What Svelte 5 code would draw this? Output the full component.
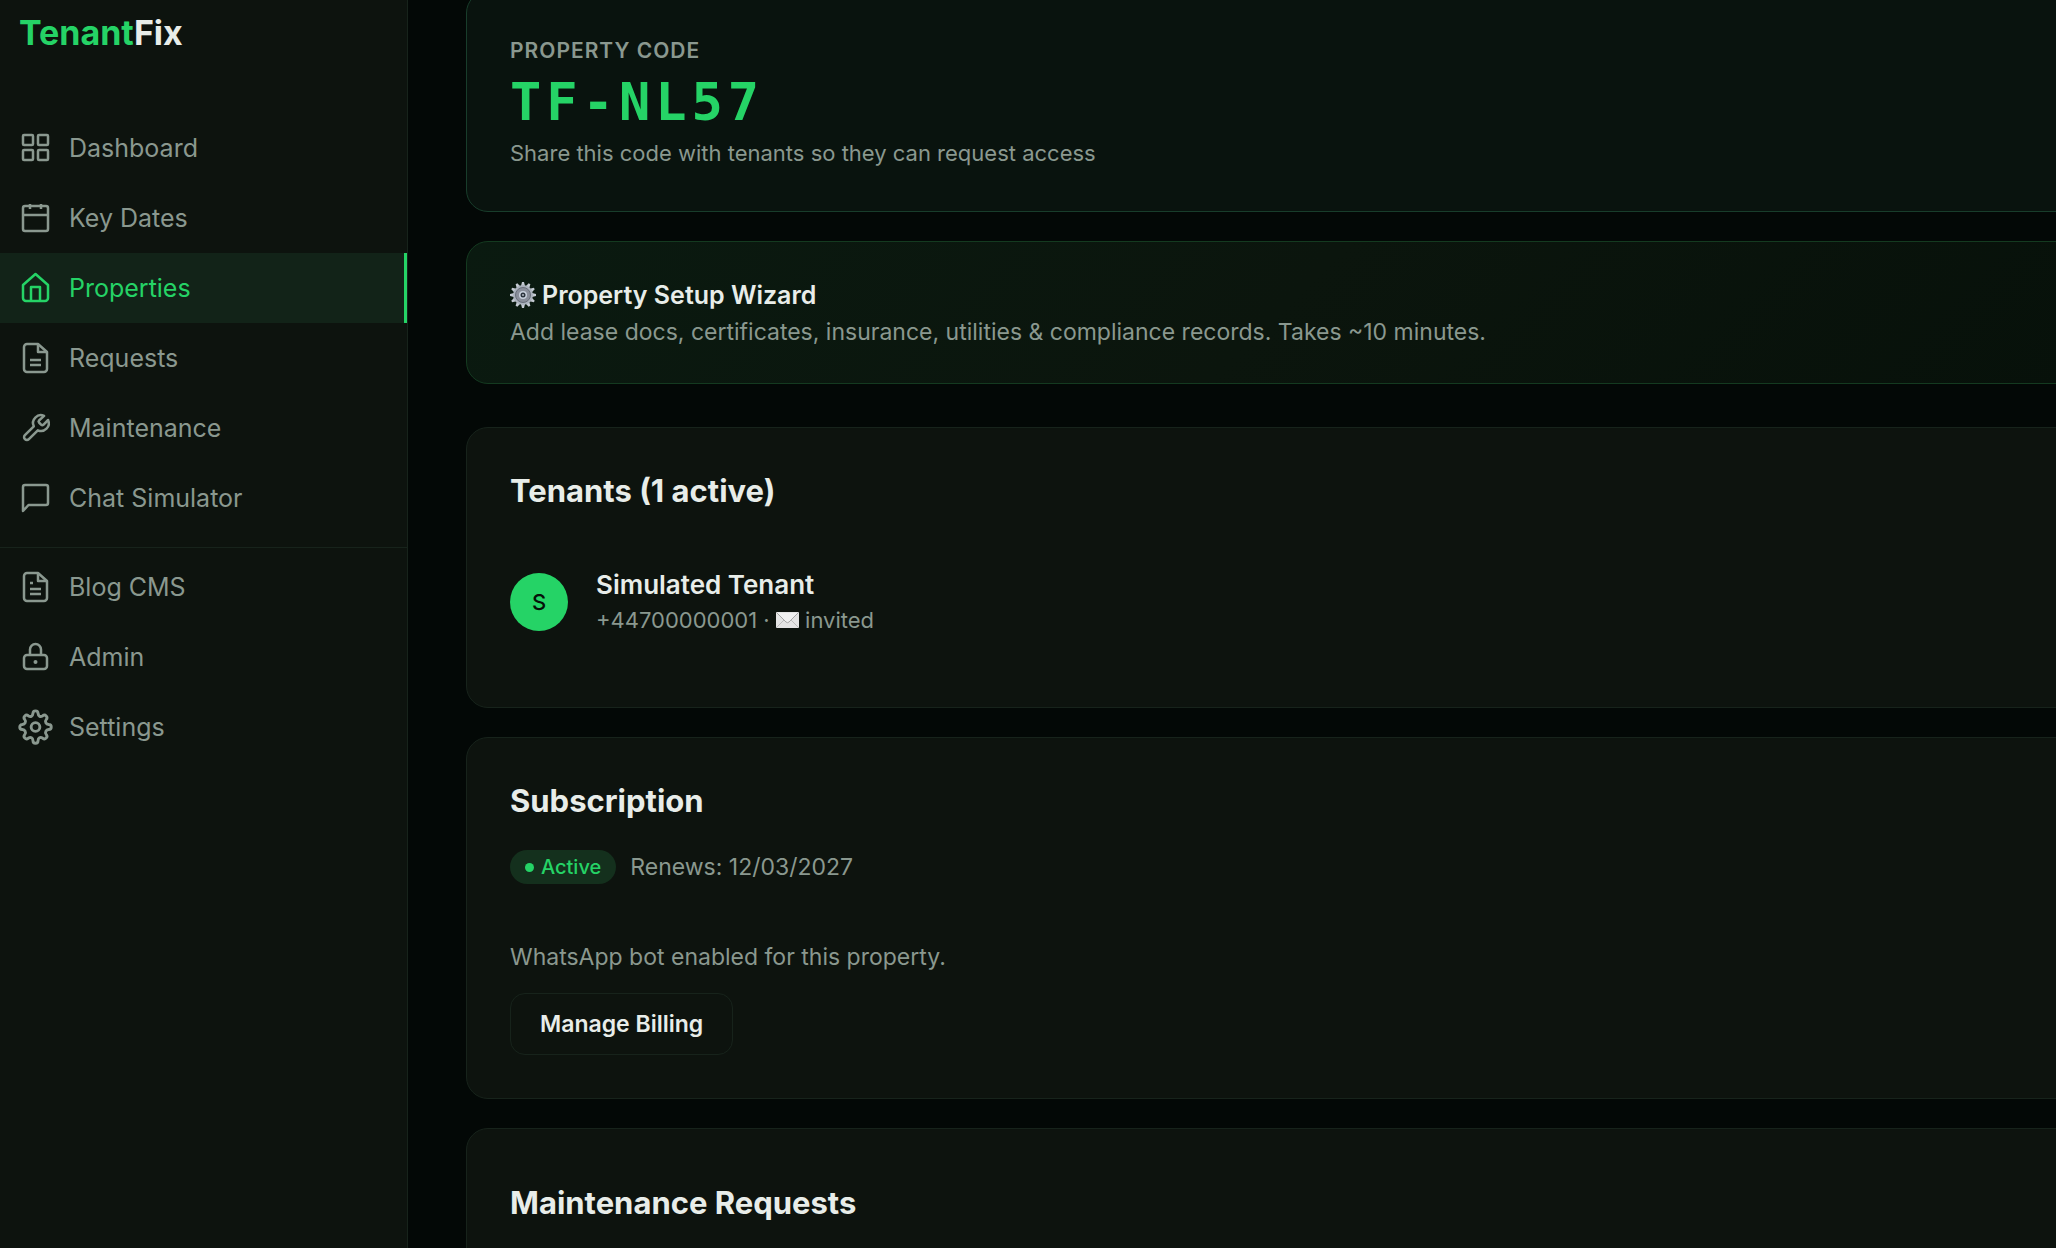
<script lang="ts">
    const mainNav = [
        { label: 'Dashboard', icon: 'grid' },
        { label: 'Key Dates', icon: 'calendar' },
        { label: 'Properties', icon: 'home' },
        { label: 'Requests', icon: 'file' },
        { label: 'Maintenance', icon: 'wrench' },
        { label: 'Chat Simulator', icon: 'chat' },
    ];

    const adminNav = [
        { label: 'Blog CMS', icon: 'article' },
        { label: 'Admin', icon: 'lock' },
        { label: 'Settings', icon: 'gear' },
    ];

    let current = $state('Properties');

    // one tooth of the wizard cog every 30 degrees
    const teeth = Array.from({ length: 12 }, (_, i) => i * 30);
</script>

{#snippet icon(name: string)}
    <svg class="icon" viewBox="0 0 32 32" aria-hidden="true">
        {#if name === 'grid'}
            <rect x="3" y="3" width="10" height="10" rx="1" />
            <rect x="18" y="3" width="10" height="10" rx="1" />
            <rect x="3" y="18" width="10" height="10" rx="1" />
            <rect x="18" y="18" width="10" height="10" rx="1" />
        {:else if name === 'calendar'}
            <rect x="3" y="4" width="25" height="25" rx="2" />
            <path d="M10 2v5M21 2v5M3 13h25" />
        {:else if name === 'home'}
            <path d="M3 13 15.5 2 28 13v13a3 3 0 0 1-3 3H6a3 3 0 0 1-3-3z" />
            <path d="M11 29V15h9v14" />
        {:else if name === 'file'}
            <path d="M18 2H7a3 3 0 0 0-3 3v22a3 3 0 0 0 3 3h17a3 3 0 0 0 3-3V10z" />
            <path d="M18 2v8h9M10 18h11M10 23h11" />
        {:else if name === 'wrench'}
            <path d="m19 8.500a1.5 1.5 0 0 0 0 2l2.300 2.300a1.5 1.5 0 0 0 2 0l4.800-4.800a7.800 7.800 0 0 1-10.300 10.300L8.900 27.200a2.800 2.800 0 0 1-4-4l8.900-8.900A7.800 7.800 0 0 1 24.100 3.900z" />
        {:else if name === 'chat'}
            <path d="M28 21a2 2 0 0 1-2 2H8.500L3 29V5a2 2 0 0 1 2-2h21a2 2 0 0 1 2 2z" />
        {:else if name === 'article'}
            <path d="M18 2H7a3 3 0 0 0-3 3v22a3 3 0 0 0 3 3h17a3 3 0 0 0 3-3V10z" />
            <path d="M18 2v8h9M10 18h11M10 23h11M10 12h3" />
        {:else if name === 'lock'}
            <rect x="4" y="14" width="23" height="14" rx="3" />
            <path d="M10 14V8.500a5.500 5.500 0 0 1 11 0V14" />
            <circle class="fill" cx="15.5" cy="21" r="2" />
        {:else if name === 'gear'}
            <g transform="translate(15.5 16) scale(1.15) translate(-15.6 -15)">
                <path d="M13.400 3.200a2.200 2.200 0 0 1 4.400 0c.2 2.300 1.900 3.300 3.900 2.200 1.200-1 2.400-.8 3.200 0s1 2 0 3.200c-1.500 1.800-.1 3.900 2.200 4.200a2.200 2.200 0 0 1 0 4.400c-2.300.3-3.600 2.300-2.200 4.200 1 1.200.8 2.400 0 3.200s-2 1-3.200 0c-2-1.100-3.700-.1-3.900 2.300a2.200 2.200 0 0 1-4.400 0c-.2-2.400-1.900-3.400-3.900-2.300-1.200 1-2.400.8-3.200 0s-1-2 0-3.200c1.400-1.900.1-3.900-2.200-4.200a2.200 2.200 0 0 1 0-4.400c2.300-.3 3.700-2.400 2.200-4.200-1-1.200-.8-2.400 0-3.200s2-1 3.200 0c2 1.100 3.700.1 3.900-2.200z" />
                <circle cx="15.600" cy="15" r="3.800" />
            </g>
        {/if}
    </svg>
{/snippet}

{#snippet navLink(item: { label: string; icon: string })}
    <a
        href="#{item.icon}"
        class:active={current === item.label}
        aria-current={current === item.label ? 'page' : undefined}
        onclick={() => (current = item.label)}
    >
        {@render icon(item.icon)}
        {item.label}
    </a>
{/snippet}

<div class="app">
    <aside class="sidebar">
        <div class="logo">Tenant<span>Fix</span></div>
        <nav>
            {#each mainNav as item}
                {@render navLink(item)}
            {/each}
            <hr />
            {#each adminNav as item}
                {@render navLink(item)}
            {/each}
        </nav>
    </aside>

    <main>
        <section class="card code-card">
            <div class="eyebrow">Property Code</div>
            <div class="code">TF-NL57</div>
            <p>Share this code with tenants so they can request access</p>
        </section>

        <section class="card wizard">
            <div class="wizard-title">
                <svg class="cog" viewBox="0 0 26 26" aria-hidden="true">
                    {#each teeth as angle}
                        <path d="M11 4 12 0h2l1 4z" fill="#c3c9d1" transform="rotate({angle} 13 13)" />
                    {/each}
                    <circle cx="13" cy="13" r="10" fill="#aab1bc" />
                    <circle cx="13" cy="13" r="7.5" fill="#8a8f9b" stroke="#686e79" />
                    <circle cx="13" cy="13" r="4" fill="#c8d0dc" />
                    <circle cx="13" cy="13" r="2.5" fill="#2b333d" />
                    <circle cx="13" cy="13" r="1" fill="#b4bbc4" />
                </svg>
                Property Setup Wizard
            </div>
            <p>Add lease docs, certificates, insurance, utilities &amp; compliance records. Takes ~10 minutes.</p>
        </section>

        <section class="card tenants">
            <h2>Tenants (1 active)</h2>
            <div class="tenant">
                <div class="avatar">S</div>
                <div>
                    <div class="name">Simulated Tenant</div>
                    <div class="contact">
                        +44700000001 ·
                        <svg class="mail" viewBox="0 0 23 16" aria-hidden="true">
                            <rect width="23" height="16" rx="1" fill="#e4e4e4" />
                            <path d="m1 15 7-7M22 15l-7-7" stroke="#bcbcbc" fill="none" />
                            <path d="m1 1 9 9q1.500 1.400 3 0l9-9" stroke="#a5a5a5" fill="#f1f1f1" />
                        </svg>
                        invited
                    </div>
                </div>
            </div>
        </section>

        <section class="card subscription">
            <h2>Subscription</h2>
            <div class="status">
                <span class="badge"><i class="dot"></i>Active</span>
                <span>Renews: 12/03/2027</span>
            </div>
            <p>WhatsApp bot enabled for this property.</p>
            <button type="button">Manage Billing</button>
        </section>

        <section class="card requests">
            <h2>Maintenance Requests</h2>
        </section>
    </main>
</div>

<style>
    :global(body) {
        margin: 0;
        background: #030806;
    }

    .app {
        --green: #25d366;
        --text: #e8ede9;
        --muted: #8a988f;
        --surface: #0d130e;
        --line: #17231b;

        display: flex;
        height: 100vh;
        overflow: hidden;
        color: var(--text);
        font-family: Inter, "Open Sans", sans-serif;
        font-size: 23px;
        line-height: 32px;
    }

    /* --- Sidebar --- */
    .sidebar {
        flex: none;
        box-sizing: border-box;
        width: 408px;
        background: var(--surface);
        border-right: 1px solid var(--line);
    }

    .logo {
        padding: 13px 19px 60px;
        color: var(--green);
        font-size: 34px;
        font-weight: 700;
        line-height: 40px;
    }

    .logo span {
        color: var(--text);
    }

    nav a {
        display: flex;
        align-items: center;
        gap: 17px;
        height: 70px;
        padding: 0 20px;
        color: var(--muted);
        font-size: 25px;
        text-decoration: none;
    }

    nav a.active {
        color: var(--green);
        background: #122318;
        border-right: 3px solid var(--green);
    }

    nav hr {
        height: 1px;
        margin: 14px 0 4px;
        border: 0;
        background: var(--line);
    }

    .icon {
        flex: none;
        width: 32px;
        height: 32px;
        overflow: visible;
        fill: none;
        stroke: currentColor;
        stroke-width: 2.5;
        stroke-linejoin: round;
    }

    .icon .fill {
        fill: currentColor;
        stroke: none;
    }

    /* --- Cards --- */
    /* the column runs past the right and top edges of the window */
    main {
        flex: 1;
        min-width: 0;
        margin: -9px -30px 0 58px;
    }

    .card {
        box-sizing: border-box;
        margin-bottom: 29px;
        padding: 43px;
        background: var(--surface);
        border: 1px solid var(--line);
        border-radius: 22px;
    }

    .card p {
        margin: 0;
        color: var(--muted);
    }

    h2 {
        margin: 0;
        font-size: 31px;
        font-weight: 700;
        line-height: 40px;
    }

    .code-card {
        padding-bottom: 42px;
        background: #09130e;
        border-color: #183d2b;
    }

    .code-card p {
        font-size: 22px;
    }

    .eyebrow {
        color: var(--muted);
        font-size: 21px;
        font-weight: 600;
        letter-spacing: 1px;
        text-transform: uppercase;
    }

    .code {
        color: var(--green);
        font: 700 52px/70px "DejaVu Sans Mono", monospace;
        letter-spacing: 5px;
    }

    .wizard {
        margin-bottom: 43px;
        padding: 35px 43px;
        background: linear-gradient(135deg, #0a1a10, #0b150d 50%, #07110a);
        border-color: #143a20;
    }

    .wizard-title {
        display: flex;
        align-items: center;
        gap: 6px;
        margin-bottom: 3px;
        font-size: 25px;
        font-weight: 600;
        line-height: 36px;
    }

    .cog {
        width: 26px;
        height: 26px;
    }

    .tenant {
        display: flex;
        align-items: center;
        gap: 28px;
        padding: 56px 0 27px;
    }

    .avatar {
        display: grid;
        place-items: center;
        width: 58px;
        height: 58px;
        border-radius: 50%;
        color: #061009;
        background: var(--green);
        font-size: 22px;
        font-weight: 500;
    }

    .name {
        font-size: 26px;
        font-weight: 600;
        line-height: 36px;
    }

    .contact {
        color: var(--muted);
        font-size: 22px;
        line-height: 34px;
    }

    .mail {
        width: 23px;
        height: 16px;
    }

    .status {
        display: flex;
        align-items: center;
        gap: 14px;
        margin: 29px 0 57px;
        color: var(--muted);
    }

    .badge {
        display: flex;
        align-items: center;
        gap: 7px;
        padding: 1px 15px;
        border-radius: 17px;
        color: var(--green);
        background: #14301d;
        font-size: 20px;
        font-weight: 500;
    }

    .dot {
        width: 9px;
        height: 9px;
        border-radius: 50%;
        background: currentColor;
    }

    button {
        margin-top: 20px;
        padding: 14px 29px;
        border: 1px solid var(--line);
        border-radius: 15px;
        color: var(--text);
        background: transparent;
        font: inherit;
        font-weight: 600;
    }

    .requests {
        min-height: 300px;
        padding-top: 54px;
    }
</style>
